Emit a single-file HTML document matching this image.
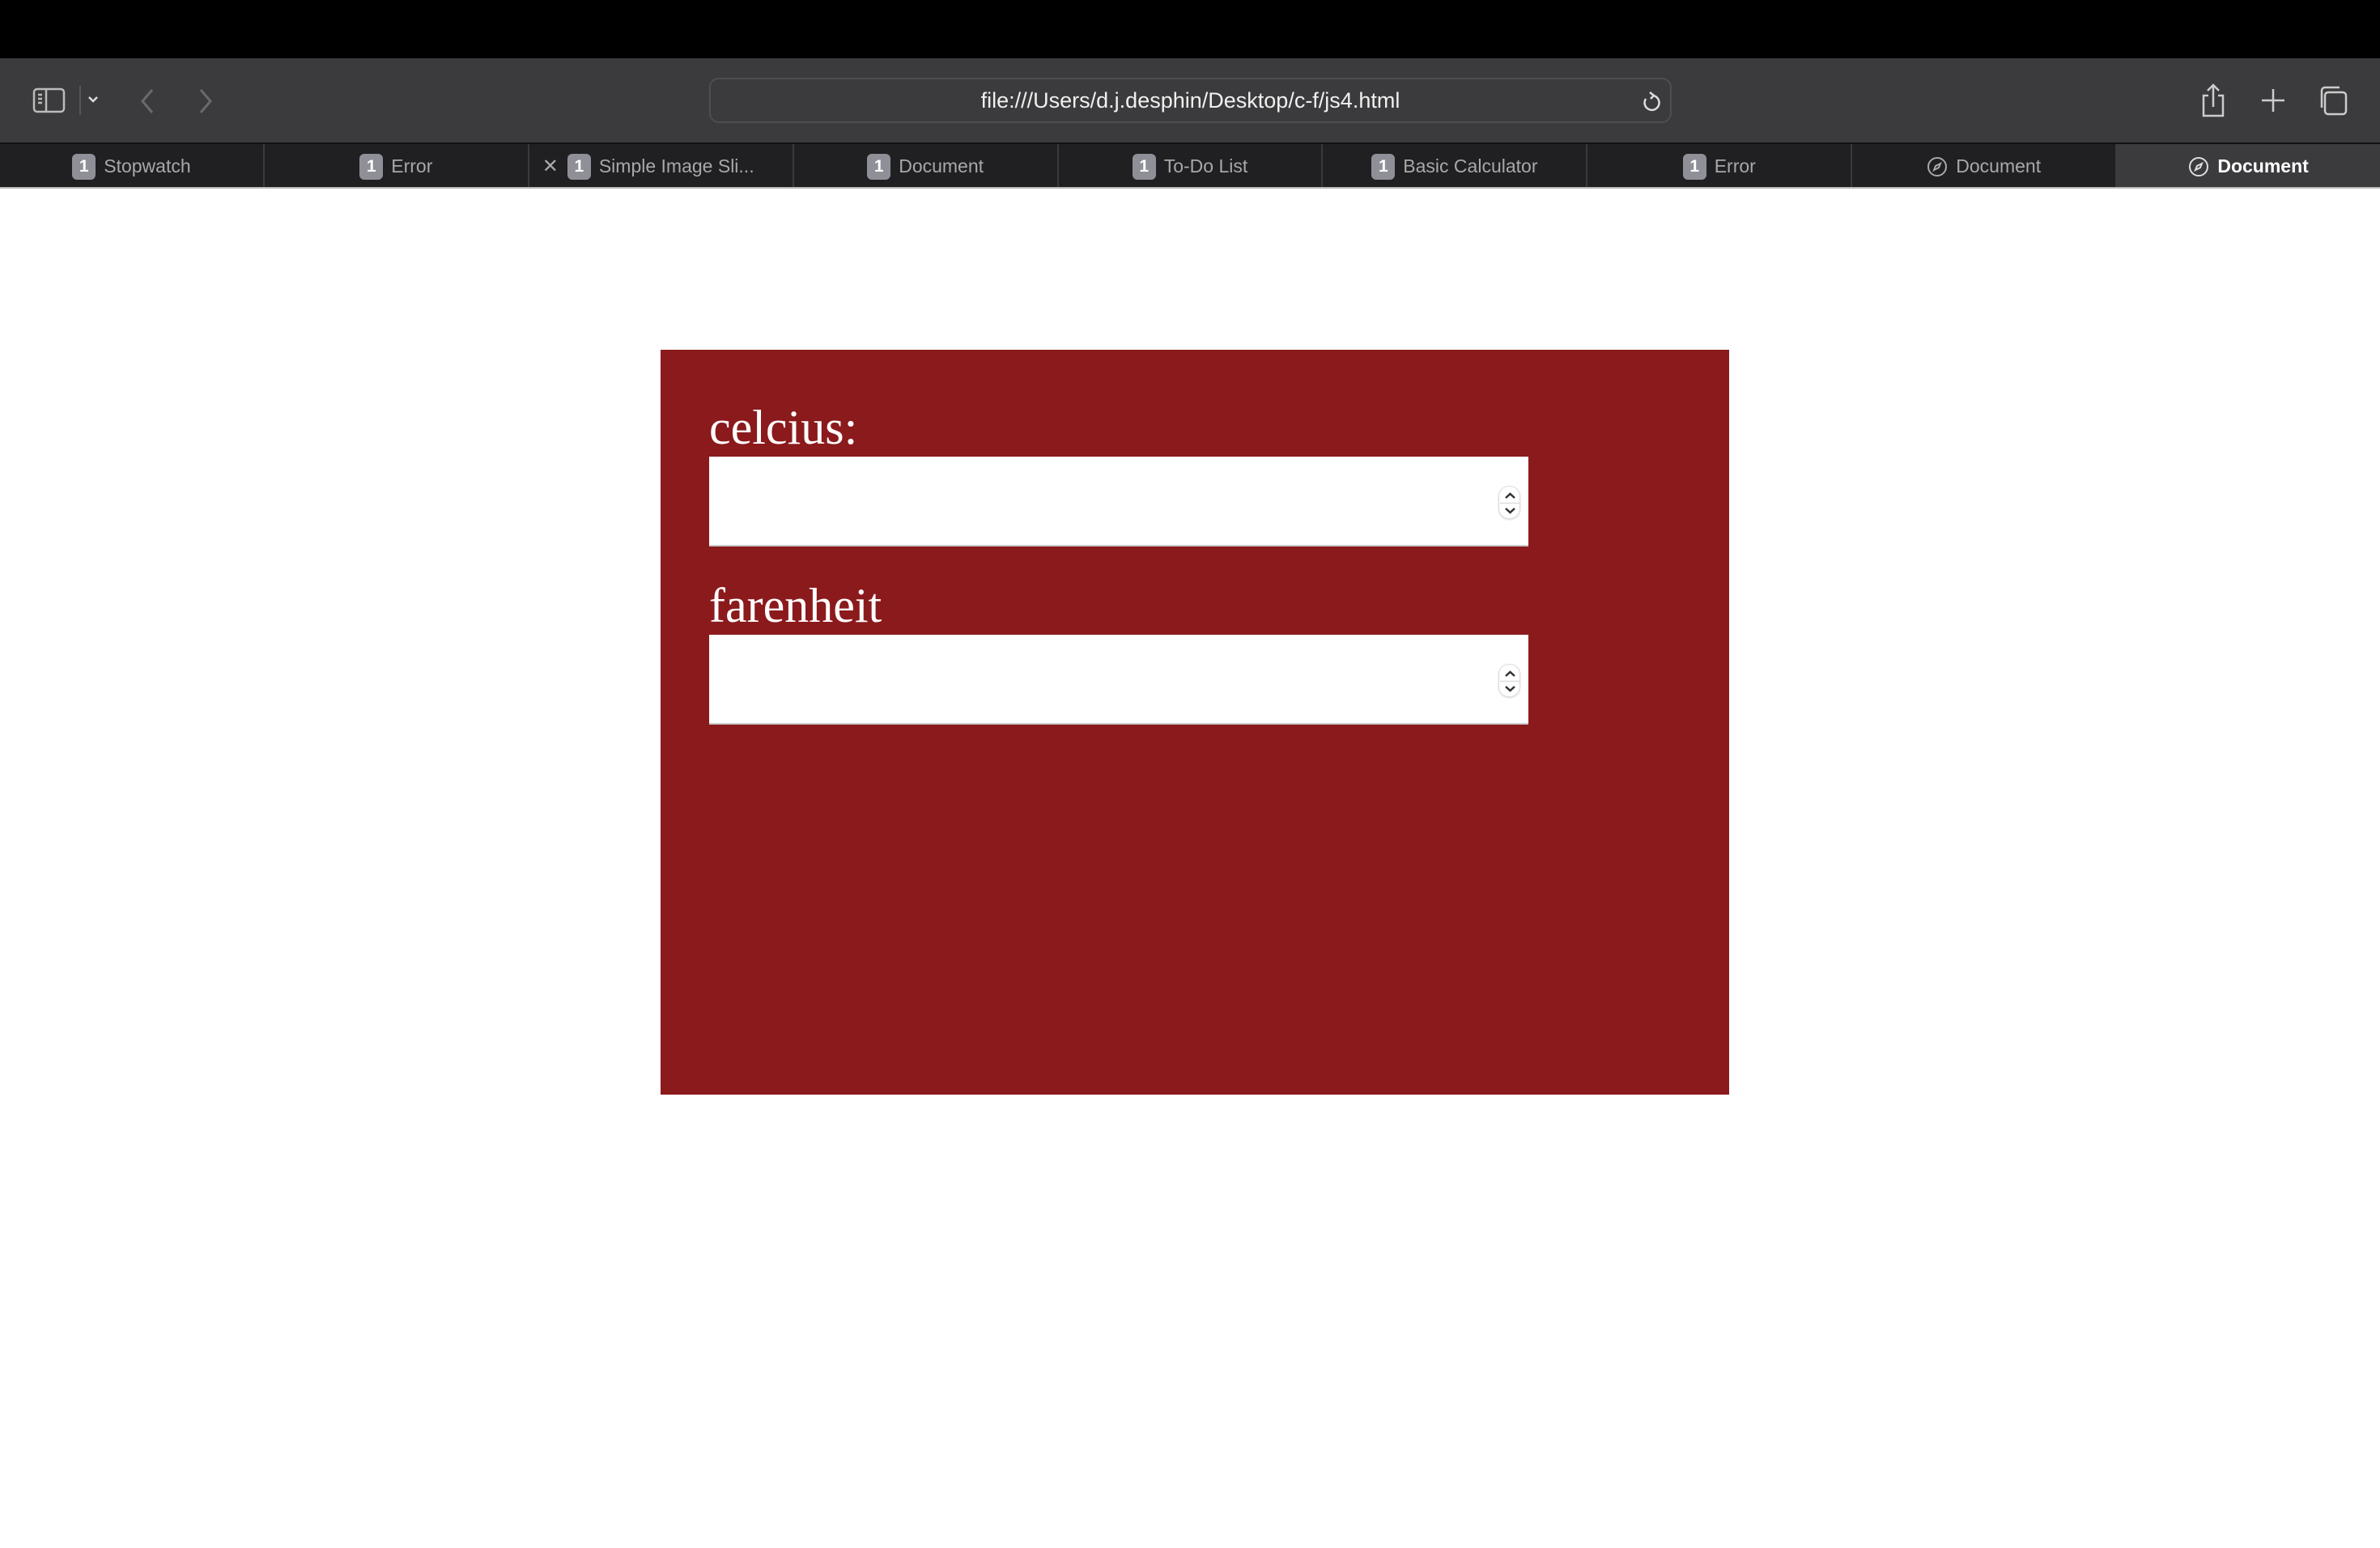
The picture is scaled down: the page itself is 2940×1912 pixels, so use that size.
<!DOCTYPE html>
<html><head><meta charset="utf-8"><style>
*{margin:0;padding:0;box-sizing:border-box}
html,body{width:2940px;height:1912px;background:#fff;overflow:hidden;font-family:"Liberation Sans",sans-serif}
#top{position:absolute;left:0;top:0;width:2940px;height:72px;background:#000}
#tool{position:absolute;left:0;top:72px;width:2940px;height:104px;background:#3b3b3d}
#url{position:absolute;left:876px;top:24px;width:1189px;height:56px;border:2px solid #4e4e50;border-radius:12px;color:#f0f0f0;font-size:27px;text-align:center;line-height:52px}
#tabs{position:absolute;left:0;top:176px;width:2940px;height:57px;background:#202022;display:flex;border-top:2px solid #111}
.tab{flex:1;border-right:2px solid #3a3a3c;color:#a8a8ac;font-size:23px;display:flex;align-items:center;justify-content:center;gap:10px;position:relative}
.tab.act{background:#3b3b3d;color:#fff;border-right:none;font-weight:bold}
.b{display:inline-block;width:29px;height:32px;background:#8f8f98;border-radius:6px;color:#fff;font-size:21px;line-height:32px;text-align:center;font-weight:bold}
#bot{position:absolute;left:0;top:231px;width:2940px;height:2px;background:#bbb}
#box{position:absolute;left:816px;top:432px;width:1320px;height:920px;background:#8b1a1c}
.lbl{position:absolute;left:60px;color:#fff;font-family:"Liberation Serif",serif;font-size:60px;line-height:60px}
.inp{position:absolute;left:60px;width:1012px;height:111px;background:#fff;border-bottom:2px solid #ccc}
.sp{position:absolute;right:10px;top:36px;width:27px;height:41px;border-radius:13px;border:1px solid #ddd;box-shadow:0 1px 2px rgba(0,0,0,.15)}
</style></head><body>
<div id="top"></div>
<div id="tool">
<svg style="position:absolute;left:40px;top:36px" width="42" height="32" viewBox="0 0 42 32" fill="none" stroke="#bbb" stroke-width="2.5"><rect x="2" y="2" width="37" height="28" rx="4"/><line x1="17" y1="2" x2="17" y2="30"/><line x1="7" y1="9" x2="12" y2="9"/><line x1="7" y1="14" x2="12" y2="14"/><line x1="7" y1="19" x2="12" y2="19"/></svg>
<div style="position:absolute;left:98px;top:34px;width:2px;height:36px;background:#555"></div>
<svg style="position:absolute;left:108px;top:46px" width="14" height="10" viewBox="0 0 14 10" fill="none" stroke="#ddd" stroke-width="2.5"><path d="M2 2l5 5 5-5"/></svg>
<svg style="position:absolute;left:172px;top:36px" width="20" height="34" viewBox="0 0 20 34" fill="none" stroke="#6a6a6c" stroke-width="3"><path d="M16 3L4 17l12 14"/></svg>
<svg style="position:absolute;left:244px;top:36px" width="20" height="34" viewBox="0 0 20 34" fill="none" stroke="#6a6a6c" stroke-width="3"><path d="M4 3l12 14L4 31"/></svg>
<div id="url">file:///Users/d.j.desphin/Desktop/c-f/js4.html
<svg style="position:absolute;right:12px;top:14px" width="24" height="28" viewBox="0 0 24 28" fill="none" stroke="#ddd" stroke-width="2.5"><path d="M15 6a9 9 0 1 1-9 4"/><path d="M11 2l5 4-4 4"/></svg></div>
<svg style="position:absolute;left:2716px;top:30px" width="36" height="44" viewBox="0 0 36 44" fill="none" stroke="#ccc" stroke-width="2.5"><path d="M12 16H6v25h24V16h-6"/><path d="M18 30V3M11 10l7-7 7 7"/></svg>
<svg style="position:absolute;left:2792px;top:36px" width="32" height="32" viewBox="0 0 32 32" stroke="#ccc" stroke-width="2.5"><path d="M16 2v28M2 16h28"/></svg>
<svg style="position:absolute;left:2862px;top:32px" width="40" height="40" viewBox="0 0 40 40" fill="none" stroke="#ccc" stroke-width="2.5"><rect x="10" y="10" width="26" height="27" rx="4"/><path d="M6 29V8a4 4 0 0 1 4-4h18"/></svg>
</div>
<div id="tabs">
<div class="tab"><span class="b">1</span>Stopwatch</div>
<div class="tab"><span class="b">1</span>Error</div>
<div class="tab"><span style="position:absolute;left:16px;font-size:24px">✕</span><span class="b">1</span>Simple Image Sli...</div>
<div class="tab"><span class="b">1</span>Document</div>
<div class="tab"><span class="b">1</span>To-Do List</div>
<div class="tab"><span class="b">1</span>Basic Calculator</div>
<div class="tab"><span class="b">1</span>Error</div>
<div class="tab"><svg width="26" height="26" viewBox="0 0 26 26" fill="none" stroke="#a8a8ac" stroke-width="2"><circle cx="13" cy="13" r="11"/><path d="M17 9l-6 3-2 5 6-3z"/></svg>Document</div>
<div class="tab act"><svg width="26" height="26" viewBox="0 0 26 26" fill="none" stroke="#ddd" stroke-width="2"><circle cx="13" cy="13" r="11"/><path d="M17 9l-6 3-2 5 6-3z"/></svg>Document</div>
</div>
<div id="bot"></div>
<div id="box">
<div class="lbl" style="top:66px">celcius:</div>
<div class="inp" style="top:132px"><div class="sp"><svg width="27" height="41" viewBox="0 0 27 41" fill="none" stroke="#333" stroke-width="2.5"><path d="M8 14l5.5-5 5.5 5M8 27l5.5 5 5.5-5"/><line x1="1" y1="20.5" x2="26" y2="20.5" stroke="#ddd" stroke-width="1.5"/></svg></div></div>
<div class="lbl" style="top:286px">farenheit</div>
<div class="inp" style="top:352px"><div class="sp"><svg width="27" height="41" viewBox="0 0 27 41" fill="none" stroke="#333" stroke-width="2.5"><path d="M8 14l5.5-5 5.5 5M8 27l5.5 5 5.5-5"/><line x1="1" y1="20.5" x2="26" y2="20.5" stroke="#ddd" stroke-width="1.5"/></svg></div></div>
</div>
</body></html>
